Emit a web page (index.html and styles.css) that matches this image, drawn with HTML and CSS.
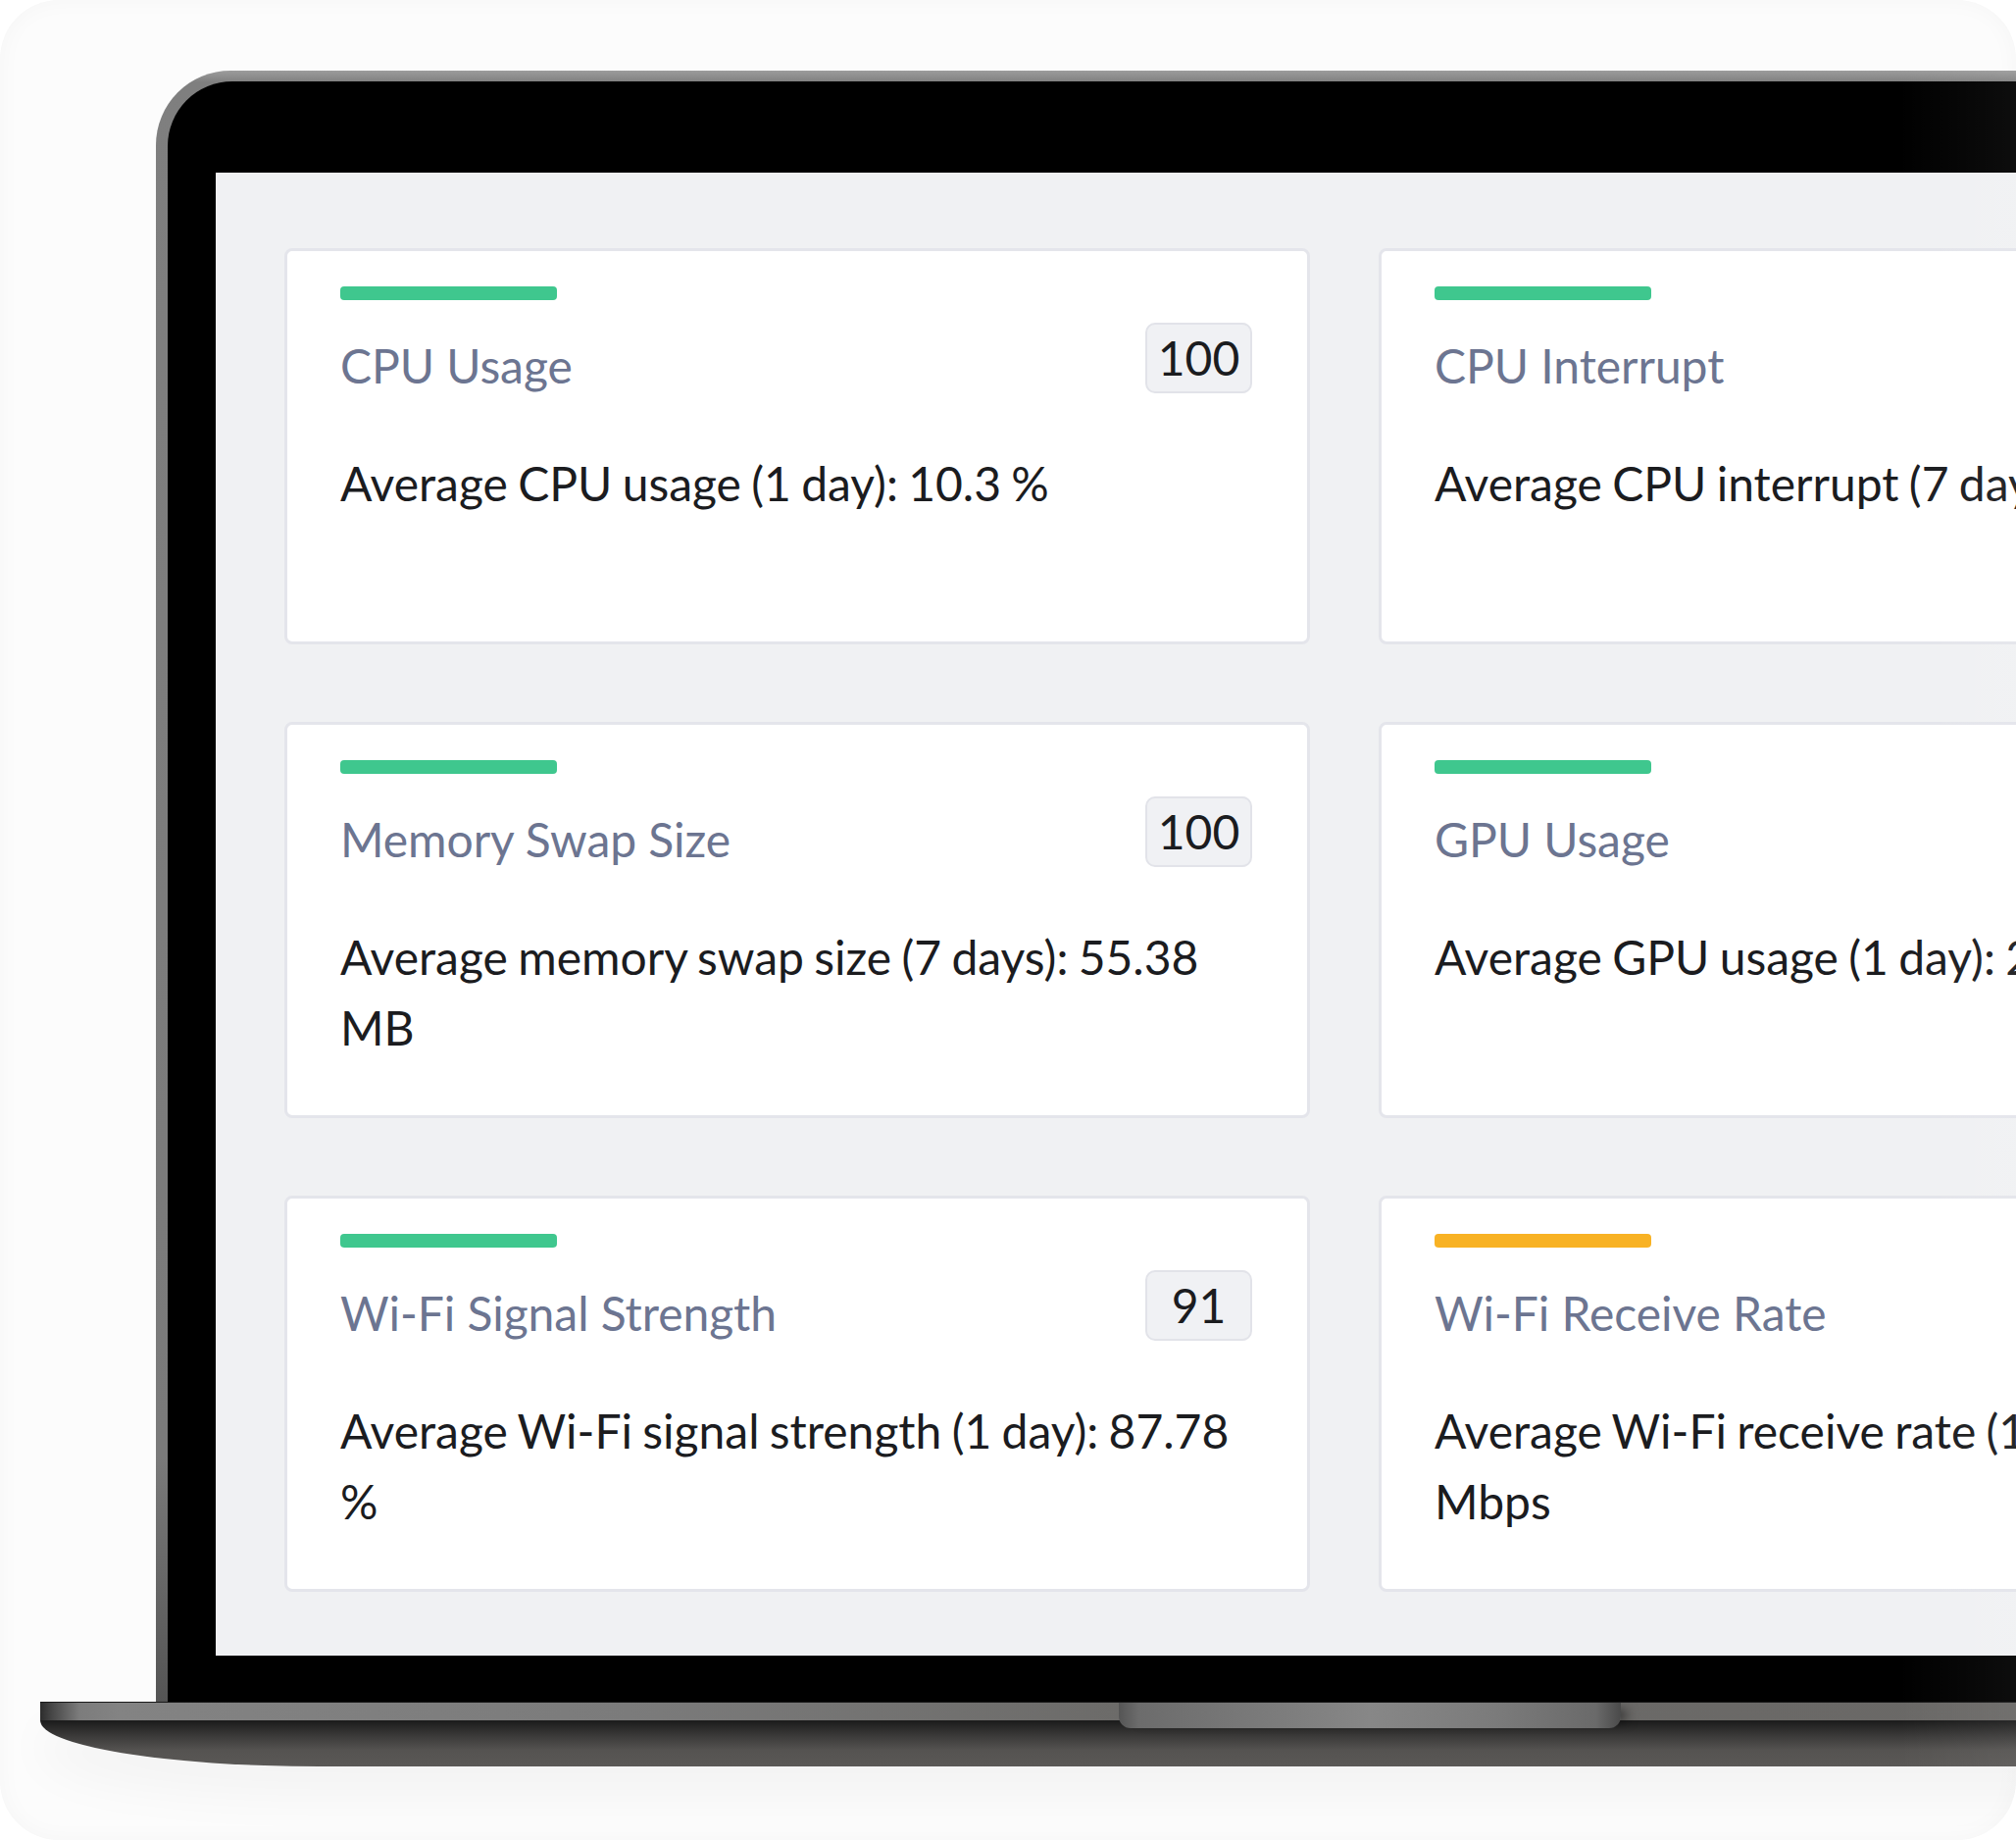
FILE: index.html
```html
<!DOCTYPE html>
<html>
<head>
    <title>Device Health</title>
    <link rel="stylesheet" href="styles.css">
</head>
<body>
    <div class="frame">
        <div class="laptop">
            <div class="lid">
                <div class="bezel">
                    <div class="screen">
                        <div class="grid">
                            <div class="card">
                                <div class="bar green"></div>
                                <div class="card-head">
                                    <div class="card-title">CPU Usage</div>
                                    <div class="score">100</div>
                                </div>
                                <div class="card-text">Average CPU usage (1 day): 10.3 %</div>
                            </div>
                            <div class="card">
                                <div class="bar green"></div>
                                <div class="card-head">
                                    <div class="card-title">CPU Interrupt</div>
                                    <div class="score">100</div>
                                </div>
                                <div class="card-text">Average CPU interrupt (7 days): 1.2 K/s</div>
                            </div>
                            <div class="card">
                                <div class="bar green"></div>
                                <div class="card-head">
                                    <div class="card-title">Memory Swap Size</div>
                                    <div class="score">100</div>
                                </div>
                                <div class="card-text">Average memory swap size (7 days): 55.38 MB</div>
                            </div>
                            <div class="card">
                                <div class="bar green"></div>
                                <div class="card-head">
                                    <div class="card-title">GPU Usage</div>
                                    <div class="score">100</div>
                                </div>
                                <div class="card-text">Average GPU usage (1 day): 2.4 %</div>
                            </div>
                            <div class="card">
                                <div class="bar green"></div>
                                <div class="card-head">
                                    <div class="card-title">Wi-Fi Signal Strength</div>
                                    <div class="score">91</div>
                                </div>
                                <div class="card-text">Average Wi-Fi signal strength (1 day): 87.78 %</div>
                            </div>
                            <div class="card">
                                <div class="bar orange"></div>
                                <div class="card-head">
                                    <div class="card-title">Wi-Fi Receive Rate</div>
                                    <div class="score">64</div>
                                </div>
                                <div class="card-text">Average Wi-Fi receive rate (1 day): 104.62 Mbps</div>
                            </div>
                        </div>
                    </div>
                </div>
            </div>
            <div class="base">
                <div class="base-bar"><span class="notch"></span></div>
                <div class="base-under"></div>
            </div>
        </div>
        <div class="edge-fade"></div>
    </div>
</body>
</html>
```

FILE: styles.css
```css
body {
    margin: 0;
    background-color: #fff;
    font-family: Lato, "Liberation Sans", sans-serif;
}
.frame {
    position: relative;
    width: 2056px;
    height: 1876px;
    box-sizing: border-box;
    padding-top: 72px;
    overflow: hidden;
    border-radius: 60px;
    background-color: #fcfcfc;
    box-shadow: inset 0 0 24px rgba(0, 0, 0, 0.03);
}
.laptop {
    width: 2700px;
}
.lid {
    margin-left: 159px;
    width: 2420px;
    padding: 11px 0 0 12px;
    border-radius: 76px 76px 0 0;
    background: linear-gradient(to bottom, #9c9c9c 0, #7f7f7f 12px, #7a7a7a 85%, #545454 100%);
}
.bezel {
    padding: 93px 0 47px 49px;
    border-radius: 66px 66px 0 0;
    background-color: #000;
}
.screen {
    padding: 77px 70px 65px 70px;
    background-color: #f0f1f3;
}
.grid {
    display: grid;
    grid-template-columns: 1046px 1046px;
    gap: 79px 70px;
}
.card {
    height: 404px;
    box-sizing: border-box;
    padding: 36px 56px 0 54px;
    background-color: #fff;
    border: 3px solid #e4e5eb;
    border-radius: 8px;
}
.bar {
    width: 221px;
    height: 14px;
    border-radius: 4px;
}
.green {
    background-color: #3fc78e;
}
.orange {
    background-color: #f8b224;
}
.card-head {
    display: flex;
    justify-content: space-between;
    align-items: flex-start;
    margin-top: 23px;
}
.card-title {
    padding-top: 8px;
    font-size: 48px;
    line-height: 72px;
    letter-spacing: -0.05px;
    color: #6c7591;
}
.score {
    width: 109px;
    box-sizing: border-box;
    text-align: center;
    font-size: 48px;
    line-height: 68px;
    color: #1b1c1f;
    background-color: #f0f1f4;
    border: 2px solid #e2e3e9;
    border-radius: 10px;
}
.card-text {
    margin-top: 48px;
    font-size: 48px;
    line-height: 72px;
    word-spacing: -2px;
    color: #1b1c1f;
}
.base {
    position: relative;
    margin-left: 41px;
    box-shadow: 0 30px 50px rgba(0, 0, 0, 0.04);
    border-bottom-left-radius: 284px 47px;
}
.base-bar {
    position: relative;
    height: 19px;
    background: linear-gradient(to right, #2c2c2c 0, #474747 12px, #7c7c7c 40px, #838383 80px, #7b7b7b 600px, #6c6b69 1100px, #686664 100%);
    border-top: 1px solid #1a1a1a;
    box-sizing: border-box;
}
.notch {
    position: absolute;
    left: 1100px;
    top: 0;
    width: 512px;
    height: 26px;
    z-index: 1;
    border-radius: 0 0 12px 12px;
    background: linear-gradient(to right, #555 0, #6c6c6c 4%, #7b7b7b 30%, #878787 50%, #7b7b7b 75%, #6a6a6a 95%, #4a4a4a 100%);
    box-shadow: 14px 0 12px -8px rgba(0, 0, 0, 0.6);
}
.base-under {
    height: 47px;
    border-bottom-left-radius: 284px 47px;
    background: linear-gradient(to bottom, #1b1b1b 0, #3c3b3a 35%, #555351 65%, #5a5856 100%);
}
.edge-fade {
    position: absolute;
    top: 0;
    right: 0;
    bottom: 0;
    width: 120px;
    background: linear-gradient(to right, rgba(255, 255, 255, 0), rgba(255, 255, 255, 0.05));
}
```
